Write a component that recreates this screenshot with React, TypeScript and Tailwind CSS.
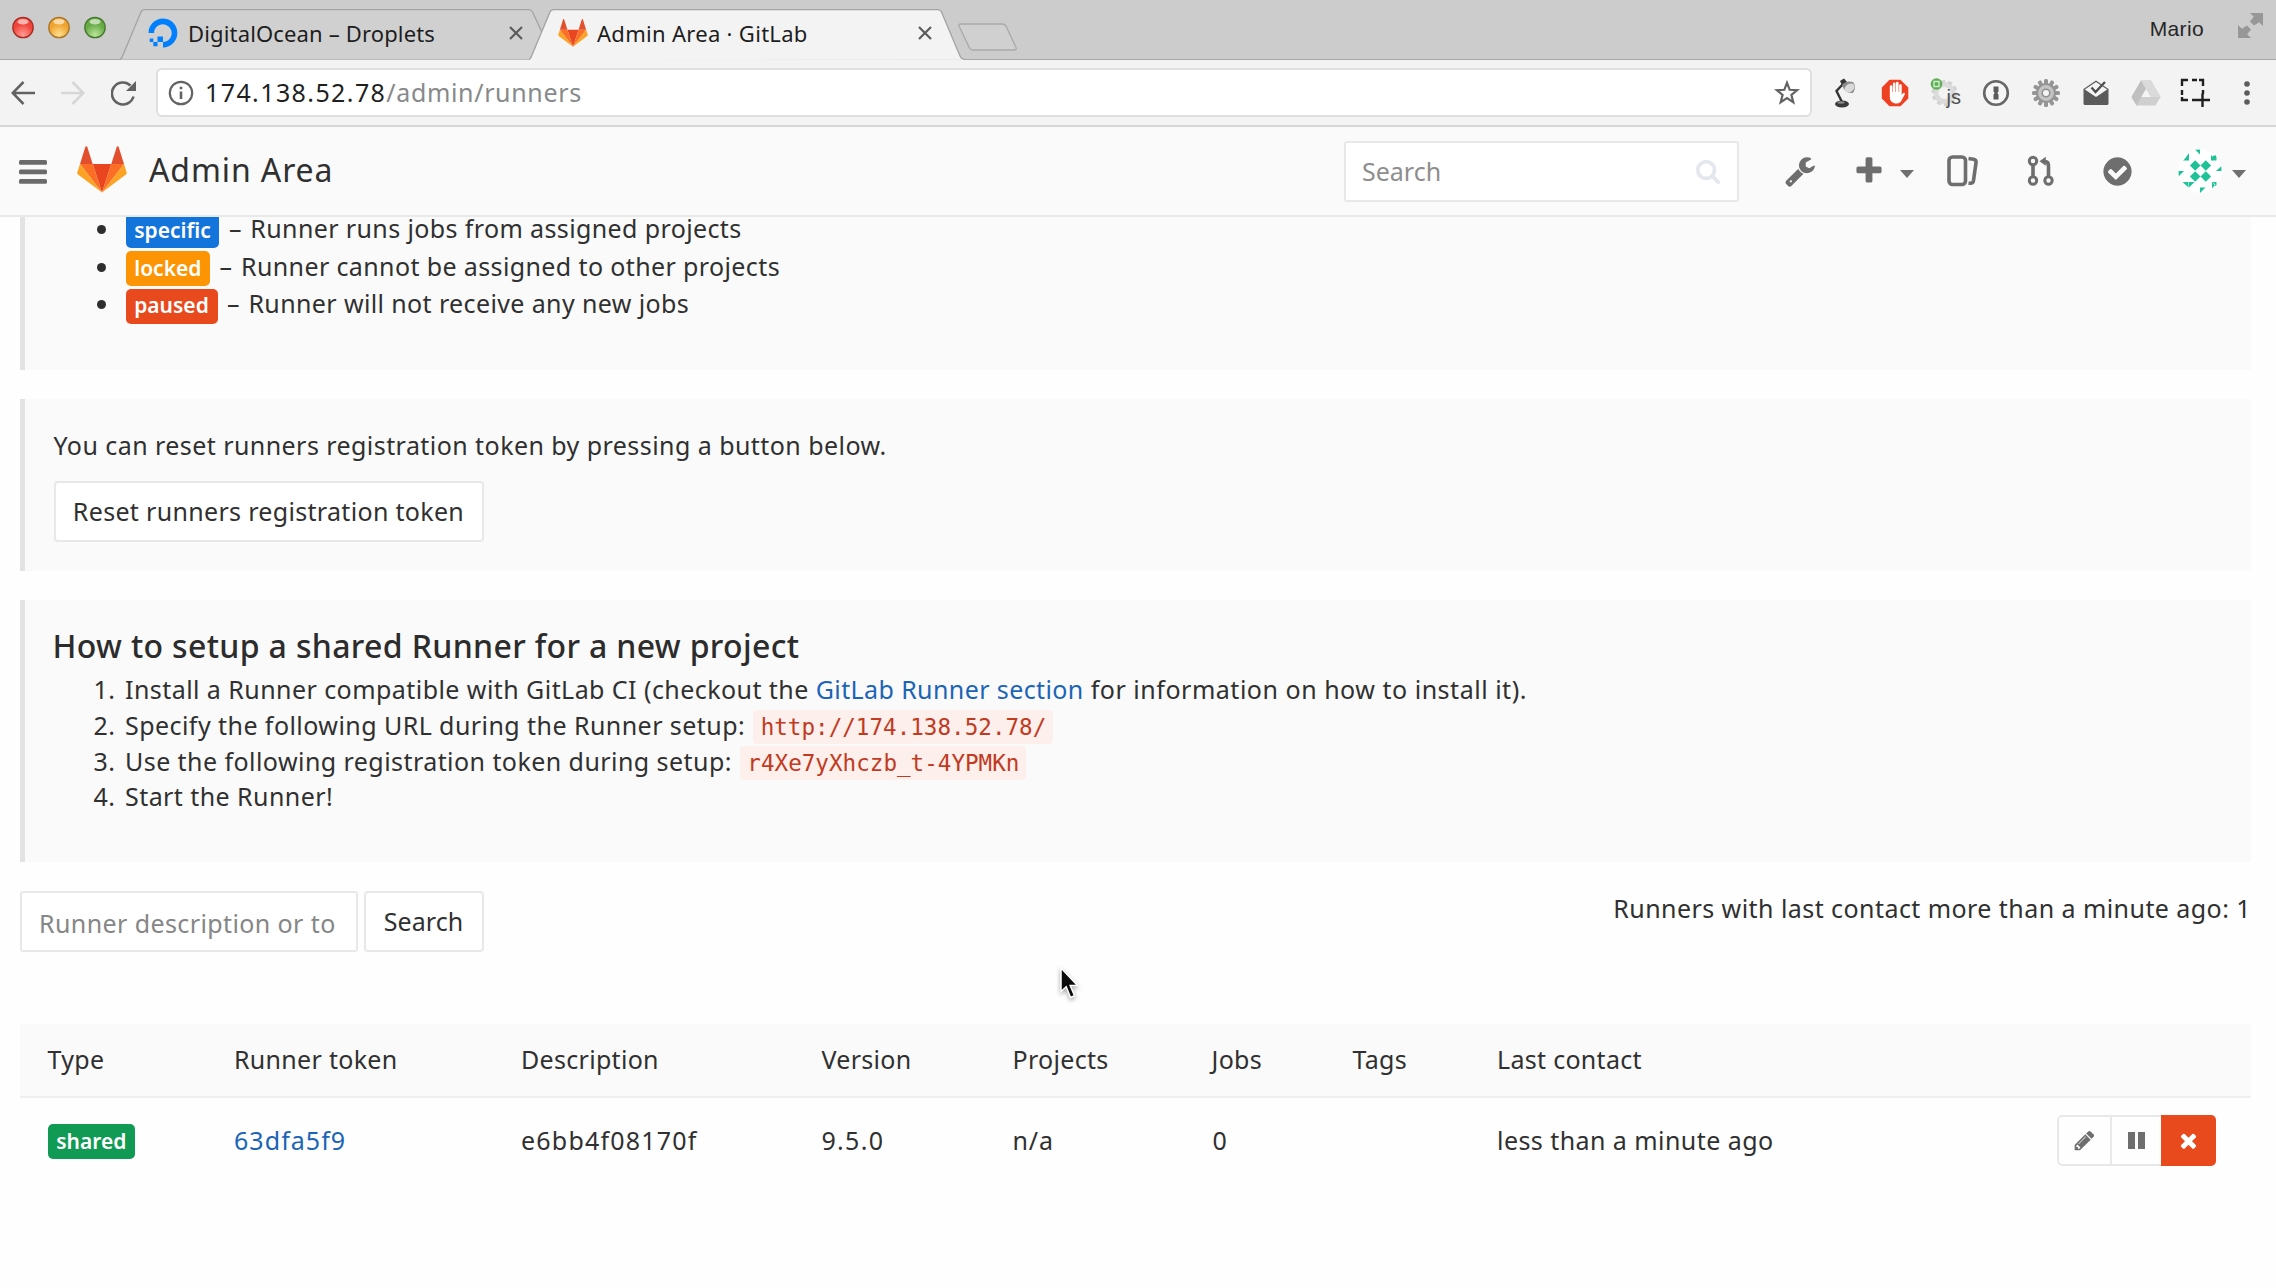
import React from "react";

const FA = {
  pencil:
    "M491 1536l91-91-235-235-91 91v107h128v128h107zm523-928q0-22-22-22-10 0-17 7l-542 542q-7 7-7 17 0 22 22 22 10 0 17-7l542-542q7-7 7-17zm-54-192l416 416-832 832h-416v-416zm683 96q0 53-37 90l-166 166-416-416 166-165q36-38 90-38 53 0 91 38l235 234q37 39 37 91z",
  times:
    "M1490 1322q0 40-28 68l-136 136q-28 28-68 28t-68-28l-294-294-294 294q-28 28-68 28t-68-28l-136-136q-28-28-28-68t28-68l294-294-294-294q-28-28-28-68t28-68l136-136q28-28 68-28t68 28l294 294 294-294q28-28 68-28t68 28l136 136q28 28 28 68t-28 68l-294 294 294 294q28 28 28 68z",
  plus:
    "M1600 736v192q0 40-28 68t-68 28h-416v416q0 40-28 68t-68 28h-192q-40 0-68-28t-28-68v-416h-416q-40 0-68-28t-28-68v-192q0-40 28-68t68-28h416v-416q0-40 28-68t68-28h192q40 0 68 28t28 68v416h416q40 0 68 28t28 68z",
  wrench:
    "M448 1472q0-26-19-45t-45-19-45 19-19 45 19 45 45 19 45-19 19-45zm644-420l-682 682q-37 37-90 37-52 0-91-37l-106-108q-38-36-38-90 0-53 38-91l681-681q39 98 114.5 173.5t173.5 114.5zm634-435q0 39-23 106-47 134-164.5 217.5t-258.5 83.5q-185 0-316.5-131.5t-131.5-316.5 131.5-316.5 316.5-131.5q58 0 121.5 16.5t107.5 46.5q16 11 16 28t-16 28l-293 169v224l193 107q5-3 79-48.5t135.5-81 70.5-35.5q15 0 23.5 10t8.5 25z",
  check:
    "M1412 734q0-28-18-46l-91-90q-19-19-45-19t-45 19l-408 407-226-226q-19-19-45-19t-45 19l-91 90q-18 18-18 46 0 27 18 45l362 362q19 19 45 19 27 0 46-19l543-543q18-18 18-45zm252 162q0 209-103 385.5t-279.5 279.5-385.5 103-385.5-103-279.5-279.5-103-385.5 103-385.5 279.5-279.5 385.5-103 385.5 103 279.5 279.5 103 385.5z",
  search:
    "M1216 832q0-185-131.5-316.5t-316.5-131.5-316.5 131.5-131.5 316.5 131.5 316.5 316.5 131.5 316.5-131.5 131.5-316.5zm512 832q0 52-38 90t-90 38q-54 0-90-38l-343-342q-179 124-399 124-143 0-273.5-55.5t-225-150-150-225-55.5-273.5 55.5-273.5 150-225 225-150 273.5-55.5 273.5 55.5 225 150 150 225 55.5 273.5q0 220-124 399l343 343q37 37 37 90z",
};

function Fa({ d, className }: { d: string; className: string }) {
  return (
    <svg viewBox="0 0 1792 1792" className={`shrink-0 ${className}`} fill="currentColor">
      <path d={d} />
    </svg>
  );
}

function Tanuki({ className }: { className: string }) {
  return (
    <svg viewBox="0 0 50 47" className={`shrink-0 ${className}`}>
      <path d="M25 46.5L34.3 18H15.7z" fill="#e9461f" />
      <path d="M25 46.5L15.7 18H3z" fill="#fc6d26" />
      <path d="M25 46.5L34.3 18H47z" fill="#fc6d26" />
      <path d="M3 18L.3 26.4a2 2 0 0 0 .7 2.2L25 46.5z" fill="#fca326" />
      <path d="M47 18l2.7 8.4a2 2 0 0 1-.7 2.2L25 46.5z" fill="#fca326" />
      <path d="M3 18h12.7L10.2.8c-.3-.9-1.5-.9-1.8 0z" fill="#e24f2c" />
      <path d="M47 18H34.3L39.8.8c.3-.9 1.5-.9 1.8 0z" fill="#e24f2c" />
    </svg>
  );
}

function DigitalOceanMark() {
  return (
    <svg viewBox="0 0 30 30" className="h-[30px] w-[30px] shrink-0" fill="#0080ff">
      <path d="M15 29.5v-5.6c6 0 10.4-5.8 8.1-12a8.400 8.400 0 0 0-5-5C12 4.700 6.100 9.100 6.100 15H.5C.5 5.600 9.600-1.800 19.500 1.300c4.300 1.400 7.800 4.800 9.100 9.100C31.700 20.400 24.400 29.500 15 29.500z" />
      <path d="M9.500 18.500H15V24H9.500zM5.300 24h4.200v4.300H5.300zM1.700 20.500h3.600V24H1.700z" />
    </svg>
  );
}

const LIGHTS = [
  ["#f0443a", "#ff9d94", "#a52f27"],
  ["#efa42f", "#ffdf8e", "#a8752a"],
  ["#67ab45", "#b9e59b", "#47782f"],
];

function TrafficLights() {
  return (
    <div className="flex gap-[14px] pl-[12px] pt-[16px]">
      {LIGHTS.map(([base, glow, rim], i) => (
        <svg key={i} viewBox="0 0 22 23" className="h-[23px] w-[22px]">
          <defs>
            <radialGradient id={`light${i}`} cx="0.5" cy="0.85" r="0.75">
              <stop offset="0" stopColor={glow} />
              <stop offset="0.7" stopColor={base} />
            </radialGradient>
          </defs>
          <circle cx="11" cy="11.500" r="10.200" fill={`url(#light${i})`} stroke={rim} strokeWidth="1.300" />
          <ellipse cx="11" cy="5.800" rx="5.500" ry="2.800" fill="#fff" opacity="0.6" />
        </svg>
      ))}
    </div>
  );
}

function CloseX() {
  return (
    <svg viewBox="0 0 14 14" className="h-[14px] w-[14px] shrink-0" stroke="#5c5c5c" strokeWidth="2.200">
      <path d="M1 1l12 12M13 1L1 13" />
    </svg>
  );
}

function TabBar() {
  return (
    <div className="flex h-[60px] bg-[#cccccc] shadow-[inset_0_-1px_0_#a9a9a9]">
      <TrafficLights />
      <div className="relative ml-[14px] mt-[9px] h-[51px] w-[409px]">
        <svg viewBox="0 0 426 51" className="absolute left-0 top-0 h-[51px] w-[426px]" fill="#d0d0d0" stroke="#a3a3a3" strokeWidth="1.300">
          <path d="M0 50.500Q2 49 3 46L21 3Q22 .7 25 .7H409Q411 .7 412.500 3L426 32V50.500" />
        </svg>
        <div className="relative flex h-[48px] items-center pl-[28px] pr-[6px]">
          <DigitalOceanMark />
          <span className="ml-[10px] w-[321px] whitespace-nowrap text-[22px] tracking-[0.150px] text-[#1d1d1d]">DigitalOcean – Droplets</span>
          <CloseX />
        </div>
      </div>
      <div className="relative mt-[9px] h-[51px] w-[436px]">
        <svg viewBox="0 0 436 51" className="absolute left-0 top-0 h-[51px] w-[436px]" fill="#f3f3f3" stroke="#a3a3a3" strokeWidth="1.300">
          <path d="M0 51Q2 49 3 46L21 3Q22 .7 25 .7H409Q411 .7 412.500 3L431 47Q432.500 50.500 436 50.500" />
          <path d="M1 50.800H434" stroke="#f3f3f3" />
        </svg>
        <div className="relative flex h-[48px] items-center pl-[29px] pr-[6px]">
          <Tanuki className="h-[28px] w-[30px]" />
          <span className="ml-[9px] w-[321px] whitespace-nowrap text-[22px] tracking-[0.3px] text-[#1d1d1d]">Admin Area · GitLab</span>
          <CloseX />
        </div>
      </div>
      <svg viewBox="0 0 60 28" className="-ml-[7px] mt-[23px] h-[28px] w-[60px]" fill="#d0d0d0" stroke="#a9a9a9" strokeWidth="1.300">
        <path d="M2.500 1H44Q47 1 48.200 3.500L58 24.500Q59 27 56 27H15Q12.500 27 11.500 25L1 3Q.5 1 2.500 1z" />
      </svg>
      <div className="ml-auto flex items-start pr-[12px]">
        <span className="mt-[13px] font-['Liberation_Sans',sans-serif] text-[21px] leading-[32px] tracking-[0.35px] text-[#262626]">Mario</span>
        <svg viewBox="0 0 27 27" className="ml-[33px] mt-[12px] h-[27px] w-[27px]" fill="#979797">
          <path d="M13 1H26V14L22.200 10.200 17 13.500 13 9.500 16.800 4.800zM1 13L4.800 16.800 10 13.500 14 17.500 10.200 22.200 14 26H1z" />
        </svg>
      </div>
    </div>
  );
}

function ExtensionIcons() {
  const cogTeeth = Array.from({ length: 12 }, (_, i) => i * 30);
  return (
    <>
      <svg viewBox="0 0 24 30" className="ml-[21px] h-[30px] w-[24px] shrink-0">
        <ellipse cx="9" cy="26" rx="7" ry="3.500" fill="#3a3a3a" />
        <path d="M9 24L3.500 13 11 5" fill="none" stroke="#333" strokeWidth="2.400" />
        <path d="M7 3L11 .5 14 4 10 9z" fill="#333" />
        <path d="M9 7Q13 2 20 4 24 9 20 15 12 16 9 7z" fill="#8a8a8a" />
        <ellipse cx="16.500" cy="10" rx="5.500" ry="4" transform="rotate(-35 16.500 10)" fill="#dadada" />
        <ellipse cx="8" cy="24.500" rx="3.500" ry="1.200" fill="#8a8a8a" />
      </svg>
      <svg viewBox="0 0 28 28" className="ml-[24px] h-[28px] w-[28px] shrink-0">
        <path d="M8.500 .8h11l7.800 7.700v11l-7.800 7.700h-11L.8 19.500v-11z" fill="#ee4023" />
        <path d="M8.800 15V7.500a1.300 1.300 0 0 1 2.600 0V13h.5V4.700a1.300 1.300 0 0 1 2.600 0V13h.5V4a1.300 1.300 0 0 1 2.600 0v9h.5V6.500a1.300 1.300 0 0 1 2.600 0V16l1-1.600c.8-1.300 2.700-.6 2.200.8L21 20.500C20 23 18.500 24.500 15.500 24.500c-4 0-6.700-2.500-6.700-6.500z" fill="#fff" />
      </svg>
      <div className="relative ml-[21px] h-[30px] w-[32px] shrink-0">
        <svg viewBox="0 0 32 30" className="absolute inset-0 h-[30px] w-[32px]">
          <circle cx="14.500" cy="15" r="8.500" fill="none" stroke="#dcdcdc" strokeWidth="5" />
          <circle cx="14.500" cy="15" r="11.500" fill="none" stroke="#d2d2d2" strokeWidth="3" strokeDasharray="4 3.200" />
          <circle cx="6.500" cy="6" r="5.800" fill="#5fae57" />
          <path d="M4 3.500h5v5H4z" fill="none" stroke="#cdeec8" strokeWidth="1.400" />
        </svg>
        <span className="absolute bottom-[-1px] right-[1px] font-['Liberation_Sans',sans-serif] text-[20px] leading-[24px] text-[#4e4e4e]">js</span>
      </div>
      <svg viewBox="0 0 28 28" className="ml-[20px] h-[28px] w-[28px] shrink-0">
        <circle cx="14" cy="14" r="11.800" fill="#f6f6f6" stroke="#666" strokeWidth="2.600" />
        <path d="M11.500 7.500h5v5l-1.200 1.500 1.200 1.500v5h-5v-5l1.200-1.500-1.200-1.500z" fill="#5c5c5c" />
      </svg>
      <svg viewBox="0 0 30 30" className="ml-[21px] h-[30px] w-[30px] shrink-0">
        {cogTeeth.map((a) => (
          <rect key={a} x="13" y="1" width="4" height="7" rx="1.500" fill="#959595" transform={`rotate(${a} 15 15)`} />
        ))}
        <circle cx="15" cy="15" r="9" fill="#c4c4c4" stroke="#949494" strokeWidth="2.200" />
        <circle cx="15" cy="15" r="3.800" fill="#f4f4f4" stroke="#909090" strokeWidth="1.600" />
      </svg>
      <svg viewBox="0 0 28 28" className="ml-[21px] h-[28px] w-[28px] shrink-0">
        <path d="M1.500 10L14 1.500l12.500 8.500v14.500a1.500 1.500 0 0 1-1.500 1.500H3a1.500 1.500 0 0 1-1.500-1.500z" fill="#5b5b5b" />
        <path d="M2.800 10.500L14 3l11.200 7.500L14 18z" fill="#f4f4f4" />
        <path d="M9.500 8.500l4 4.500L23 3" fill="none" stroke="#4c4c4c" strokeWidth="2.300" />
      </svg>
      <svg viewBox="0 0 30 26" className="ml-[21px] h-[26px] w-[30px] shrink-0">
        <path d="M10 0.500H20L29.500 17 24.500 25.500H5.500L.5 17z" fill="#cfcfcf" />
        <path d="M10 .5L15 9 5.500 25.500 .5 17z" fill="#c0c0c0" />
        <path d="M10 .5H20L29.500 17H19.500z" fill="#dadada" />
        <path d="M15 9l4.700 8h-9.400z" fill="#f5f5f5" />
      </svg>
      <svg viewBox="0 0 30 30" className="ml-[19px] h-[30px] w-[30px] shrink-0" fill="none" stroke="#1f1f1f" strokeWidth="2.400">
        <path d="M2 8V2H8M12 2H17M19 2H23V8M2 12V17M2 19V22H8M12 22H16M23 12V16M22.500 15.500V29M16 22H30" />
      </svg>
      <svg viewBox="0 0 6 24" className="ml-[34px] h-[24px] w-[6px] shrink-0" fill="#5c5c5c">
        <circle cx="3" cy="3" r="2.800" />
        <circle cx="3" cy="12" r="2.800" />
        <circle cx="3" cy="21" r="2.800" />
      </svg>
    </>
  );
}

function Toolbar() {
  return (
    <div className="flex h-[67px] items-center border-b-2 border-[#d6d6d6] bg-[#f3f3f3]">
      <svg viewBox="0 0 24 24" className="ml-[11px] h-[24px] w-[24px] shrink-0" fill="none" stroke="#626262" strokeWidth="2.500">
        <path d="M24 12H2M12.500 1L1.700 12 12.500 23" />
      </svg>
      <svg viewBox="0 0 24 24" className="ml-[26px] h-[24px] w-[24px] shrink-0" fill="none" stroke="#d6d6d6" strokeWidth="2.500">
        <path d="M0 12H22M11.500 1L22.300 12 11.500 23" />
      </svg>
      <svg viewBox="0 0 26 26" className="ml-[26px] h-[26px] w-[26px] shrink-0" fill="none" stroke="#626262" strokeWidth="2.600">
        <path d="M22.500 16.500A11 11 0 1 1 19.500 5.500" />
        <path d="M25 1V11H15z" fill="#626262" stroke="none" />
      </svg>
      <div className="ml-[19px] flex h-[49px] w-[1656px] shrink-0 items-center rounded-[6px] border-2 border-[#dfdfdf] bg-white">
        <svg viewBox="0 0 26 26" className="ml-[10px] h-[26px] w-[26px]" fill="none" stroke="#636363" strokeWidth="2.200">
          <circle cx="13" cy="13" r="11.200" />
          <path d="M13 11.500V19M13 6.800V9.300" strokeWidth="2.600" />
        </svg>
        <span className="ml-[11px] whitespace-nowrap text-[25px] tracking-[1.400px] text-[#1f1f1f]">174.138.52.78</span>
        <span className="whitespace-nowrap text-[25px] tracking-[0.650px] text-[#87898b]">/admin/runners</span>
        <svg viewBox="0 0 26 26" className="ml-auto mr-[10px] h-[26px] w-[26px]" fill="none" stroke="#636363" strokeWidth="2.200">
          <path d="M13 2.800l2.700 7 7.500.4-5.800 4.700 1.900 7.300L13 18.100l-6.300 4.100 1.900-7.300L2.800 10.200l7.500-.4z" />
        </svg>
      </div>
      <ExtensionIcons />
    </div>
  );
}

function Caret({ className }: { className: string }) {
  return (
    <svg viewBox="0 0 14 8" className={`h-[8px] w-[14px] ${className}`} fill="#707070">
      <path d="M0 0H14L7 8z" />
    </svg>
  );
}

function Avatar() {
  return (
    <svg viewBox="0 0 44 44" className="ml-[44px] h-[44px] w-[44px] rounded-full bg-white" fill="#1fc297">
      <path d="M17.200 11.200l5.300 5.300-5.300 5.300-5.300-5.300zM27.800 11.200l5.300 5.300-5.300 5.300-5.300-5.300zM17.200 22.200l5.300 5.300-5.300 5.300-5.300-5.300zM27.800 22.200l5.300 5.300-5.300 5.300-5.300-5.300z" />
      <path d="M17 .5h5v5zM11 4v7.500H5.500zM11 11.500H5l5.500-5zM33 6l5.500 5.500H33zM38.500 5v6.500L34 8zM43.500 17v5H38zM.5 22H6L.5 27.500zM4.500 33h6v5.500zM11 33h5.500L11 38.500zM22 38.500l5.500 0-5.500 5.500zM34 33h4.500v5zM34 33v6.500l3.500-4z" />
    </svg>
  );
}

function Header() {
  return (
    <header className="flex h-[90px] items-center border-b-2 border-[#e9e9e9] bg-[#fafafa] pr-[30px]">
      <svg viewBox="0 0 28 24" className="ml-[19px] mt-[2px] h-[24px] w-[28px]" fill="#6b6b6b">
        <rect width="28" height="4.800" rx="1.500" />
        <rect y="9.500" width="28" height="4.800" rx="1.500" />
        <rect y="19" width="28" height="4.800" rx="1.500" />
      </svg>
      <Tanuki className="-mt-[3px] ml-[30px] h-[47px] w-[50px]" />
      <h1 className="-mt-[3px] ml-[22px] whitespace-nowrap text-[32px] leading-[40px] tracking-[0.9px] text-[#303030]">Admin Area</h1>
      <div className="ml-auto flex h-[61px] w-[395px] items-center rounded-[3px] border-2 border-[#e8e8e8] bg-white pl-[16px] pr-[16px]">
        <span className="grow pt-[2px] text-[25px] text-[#8e8e8e]">Search</span>
        <Fa d={FA.search} className="h-[26px] w-[26px] text-[#e4e7ed]" />
      </div>
      <div className="ml-[45px] flex items-center text-[#6e6e6e]">
        <Fa d={FA.wrench} className="h-[32px] w-[32px]" />
        <Fa d={FA.plus} className="ml-[37px] h-[32px] w-[32px]" />
        <Caret className="ml-[15px] mt-[6px]" />
        <svg viewBox="0 0 32 32" className="ml-[33px] h-[32px] w-[32px]" fill="none" stroke="currentColor" strokeWidth="3.600">
          <rect x="2" y="2" width="16.500" height="27.500" rx="3.500" />
          <path d="M21.500 3.500l5 .7q3 .6 2.500 3.500L26.500 25.500q-.5 3-3.500 2.800l-1.500-.1" />
        </svg>
        <svg viewBox="0 0 28 32" className="ml-[48px] h-[32px] w-[28px]" fill="none" stroke="currentColor" strokeWidth="3">
          <circle cx="6" cy="6" r="3.700" />
          <circle cx="6" cy="25.500" r="3.700" />
          <circle cx="21.500" cy="25.500" r="3.700" />
          <path d="M6 10V21.500M21.500 21.500V11Q21.500 6.500 18 6.500" strokeWidth="3.600" />
          <path d="M12.500 6.300L18.800 1.800V10.800z" fill="currentColor" stroke="none" />
        </svg>
        <Fa d={FA.check} className="ml-[46px] h-[33px] w-[33px]" />
        <Avatar />
        <Caret className="ml-[10px] mt-[6px]" />
      </div>
    </header>
  );
}

function RunnerLegend() {
  const rows = [
    ["specific", "bg-[#1374dc]", "Runner runs jobs from assigned projects"],
    ["locked", "bg-[#fc9403]", "Runner cannot be assigned to other projects"],
    ["paused", "bg-[#e84a1d]", "Runner will not receive any new jobs"],
  ];
  return (
    <section className="flex h-[153px] flex-col border-l-[5px] border-[#e3e3e3] bg-[#fafafa]">
      <ul className="-mt-[8px] tracking-[0.380px]">
        {rows.map(([label, color, text]) => (
          <li key={label} className="flex h-[37.700px] items-center pl-[72px]">
            <span className="mt-[3px] h-[9px] w-[9px] rounded-full bg-[#2e2e2e]" />
            <span className={`ml-[20px] mt-[6px] flex h-[35px] items-center rounded-[5px] px-[8.700px] pb-[2px] text-[21px] font-semibold tracking-[0px] text-white ${color}`}>{label}</span>
            <span className="ml-[9.500px]">–</span>
            <span className="ml-[8.500px] whitespace-nowrap">{text}</span>
          </li>
        ))}
      </ul>
    </section>
  );
}

function Code({ children }: { children: string }) {
  return (
    <code className="ml-[8px] mt-[4px] flex h-[34px] items-center rounded-[4px] bg-[#fdf0ec] pl-[7.500px] pr-[6.500px] font-['DejaVu_Sans_Mono',monospace] text-[22.600px] tracking-[0px] text-[#c23a1f]">
      {children}
    </code>
  );
}

function SetupSteps() {
  const steps = [
    <>
      <span>Install a Runner compatible with GitLab CI (checkout the </span>
      <a className="tracking-[0.400px] text-[#1b64b6]">GitLab Runner section</a>
      <span className="tracking-[0.520px]"> for information on how to install it).</span>
    </>,
    <>
      <span>Specify the following URL during the Runner setup:</span>
      <Code>http://174.138.52.78/</Code>
    </>,
    <>
      <span>Use the following registration token during setup:</span>
      <Code>r4Xe7yXhczb_t-4YPMKn</Code>
    </>,
    <span>Start the Runner!</span>,
  ];
  return (
    <section className="mt-[29px] h-[262px] border-l-[5px] border-[#e3e3e3] bg-[#fafafa] pt-[26px]">
      <h4 className="pl-[28px] text-[32px] font-medium leading-[40px] tracking-[0.350px] text-[#2c2c2c]">How to setup a shared Runner for a new project</h4>
      <ol className="mt-[5px]">
        {steps.map((step, i) => (
          <li key={i} className="flex h-[35.800px] items-center whitespace-pre">
            <span className="w-[91px] text-right">{i + 1}.</span>
            <div className="ml-[9.500px] flex h-[36px] items-center">{step}</div>
          </li>
        ))}
      </ol>
    </section>
  );
}

function RunnersTable() {
  const grid = "grid grid-cols-[186.500px_287px_300.500px_191px_199px_141px_144.500px_1fr_auto] items-center pl-[28px] pr-[35px]";
  const heads = ["Type", "Runner token", "Description", "Version", "Projects", "Jobs", "Tags", "Last contact"];
  return (
    <div className="mt-[72px]">
      <div className={`${grid} h-[74px] border-b-2 border-[#efefef] bg-[#fafafa] tracking-[0.300px]`}>
        {heads.map((h) => (
          <div key={h} className="-mt-[2px]">{h}</div>
        ))}
      </div>
      <div className={`${grid} h-[84px]`}>
        <div>
          <span className="inline-flex h-[35px] items-center rounded-[5px] bg-[#109a54] px-[8.700px] pb-[2px] text-[21px] font-semibold tracking-[0px] text-white">shared</span>
        </div>
        <a className="tracking-[1.050px] text-[#1b64b6]">63dfa5f9</a>
        <div className="tracking-[1.200px]">e6bb4f08170f</div>
        <div className="tracking-[1.300px]">9.5.0</div>
        <div className="tracking-[0.900px]">n/a</div>
        <div className="pl-[1px]">0</div>
        <div />
        <div>less than a minute ago</div>
        <div className="flex h-[51px] w-[159px] overflow-hidden rounded-[5px] text-[#6e6e6e]">
          <div className="flex w-[55px] items-center justify-center rounded-l-[5px] border-2 border-[#e8e8e8]">
            <Fa d={FA.pencil} className="h-[23px] w-[23px]" />
          </div>
          <div className="flex w-[49px] items-center justify-center gap-[3px] border-y-2 border-[#e8e8e8]">
            <span className="h-[17px] w-[7px] bg-[#6e6e6e]" />
            <span className="h-[17px] w-[7px] bg-[#6e6e6e]" />
          </div>
          <div className="flex w-[55px] items-center justify-center bg-[#e84a1d]">
            <Fa d={FA.times} className="mt-[1px] h-[23px] w-[23px] text-white" />
          </div>
        </div>
      </div>
    </div>
  );
}

export default function App() {
  return (
    <div className="relative h-[1288px] w-[2276px] overflow-hidden bg-[#fefefe] font-['Noto_Sans',sans-serif]">
      <TabBar />
      <Toolbar />
      <Header />
      <main className="overflow-hidden pl-[19.500px] pr-[25px] text-[25px] leading-[36px] tracking-[0.440px] text-[#303030]">
        <RunnerLegend />
        <section className="mt-[29px] h-[172px] border-l-[5px] border-[#e3e3e3] bg-[#fafafa] pl-[29px] pt-[28px]">
          <p>You can reset runners registration token by pressing a button below.</p>
          <button className="mt-[18px] flex h-[61px] w-[430px] items-center justify-center rounded-[4px] border-2 border-[#e8e8e8] bg-white pb-[1px] tracking-[0.320px]">
            Reset runners registration token
          </button>
        </section>
        <SetupSteps />
        <div className="mt-[29px] flex h-[61px]">
          <div className="flex w-[338px] items-center rounded-[3px] border-2 border-[#e8e8e8] bg-white pl-[17.500px] pt-[2px] tracking-[0.400px] text-[#868686]">
            <span className="whitespace-nowrap">Runner description or to</span>
          </div>
          <button className="ml-[6px] flex w-[120px] items-center justify-center rounded-[4px] border-2 border-[#e8e8e8] bg-white pb-[2px] tracking-[0.100px]">Search</button>
          <p className="-mt-[1px] ml-auto whitespace-nowrap">Runners with last contact more than a minute ago: 1</p>
        </div>
        <RunnersTable />
      </main>
      <svg viewBox="0 0 24 34" className="absolute left-[1059px] top-[966px] h-[34px] w-[24px] drop-shadow-[0_2px_2px_rgba(0,0,0,0.35)]">
        <path d="M2 2V25.500L7.200 20.800 11.500 31.500 15.500 29.800 11.200 19.500H18.500z" fill="#0a0a0a" stroke="#fff" strokeWidth="1.500" />
      </svg>
    </div>
  );
}
